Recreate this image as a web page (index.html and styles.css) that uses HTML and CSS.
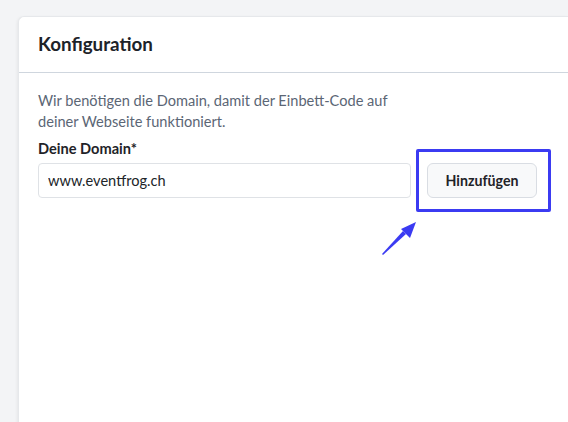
FILE: index.html
```html
<!DOCTYPE html>
<html lang="de">
<head>
<meta charset="utf-8">
<link rel="stylesheet" href="styles.css">
</head>
<body>
<div class="page">
  <section class="card">
    <header class="card-header">
      <h2 class="title">Konfiguration</h2>
    </header>
    <div class="card-body">
      <p class="intro">Wir benötigen die Domain, damit der Einbett-Code auf deiner Webseite funktioniert.</p>
      <label class="label" for="domain">Deine Domain*</label>
      <div class="row">
        <input id="domain" class="input" type="text" value="www.eventfrog.ch">
        <div class="btn-wrap">
          <button class="btn" type="button">Hinzufügen</button>
          <span class="highlight"></span>
          <svg class="arrow" width="40" height="40" viewBox="0 0 40 40">
            <polygon points="3,36 4,37 27,16 24,13" fill="#3b3bf2"/>
            <polygon points="37,4 22,11 31,20" fill="#3b3bf2"/>
          </svg>
        </div>
      </div>
    </div>
  </section>
</div>
</body>
</html>
```

FILE: styles.css
```css
html, body {
  margin: 0;
  padding: 0;
  background: #f3f4f6;
  overflow: hidden;
}
.page {
  padding: 16px 0 0 18px;
  height: 422px;
  box-sizing: border-box;
}
.card {
  height: 420px;
  background: #fff;
  border: 1px solid #e6e8eb;
  border-right: none;
  border-radius: 6px 0 0 0;
  box-shadow: -1px 1px 3px rgba(0,0,0,0.06);
  font-family: Lato, "Liberation Sans", sans-serif;
  box-sizing: border-box;
}
.card-header {
  padding: 15px 19px 16px;
  border-bottom: 1px solid #cfd6de;
}
.title {
  margin: 0;
  font-size: 18.8px;
  line-height: 24px;
  font-weight: 700;
  color: #1d2329;
}
.card-body {
  padding: 17px 19px;
}
.intro {
  margin: 0 0 6px;
  width: 373px;
  font-size: 14.6px;
  line-height: 21px;
  color: #5b6675;
}
.label {
  display: block;
  font-size: 14.6px;
  line-height: 21px;
  font-weight: 700;
  color: #1f2328;
  margin-bottom: 4px;
}
.row {
  display: flex;
  gap: 16px;
  align-items: flex-start;
}
.input {
  width: 373px;
  height: 35px;
  box-sizing: border-box;
  border: 1px solid #dfe2e6;
  border-radius: 4px;
  padding: 0 9px;
  font-family: inherit;
  font-size: 14.6px;
  color: #212529;
  outline: none;
}
.btn-wrap {
  position: relative;
}
.btn {
  width: 110px;
  height: 35px;
  box-sizing: border-box;
  background: #f8f9fa;
  border: 1px solid #d9dde3;
  border-radius: 6px;
  font-family: inherit;
  font-size: 14.2px;
  font-weight: 700;
  color: #1f2328;
  padding: 0;
}
.highlight {
  position: absolute;
  left: -11px;
  top: -14px;
  width: 135px;
  height: 63px;
  box-sizing: border-box;
  border: 3px solid #3b3bf2;
  border-radius: 2px;
}
.arrow {
  position: absolute;
  left: -48px;
  top: 55px;
}
```
